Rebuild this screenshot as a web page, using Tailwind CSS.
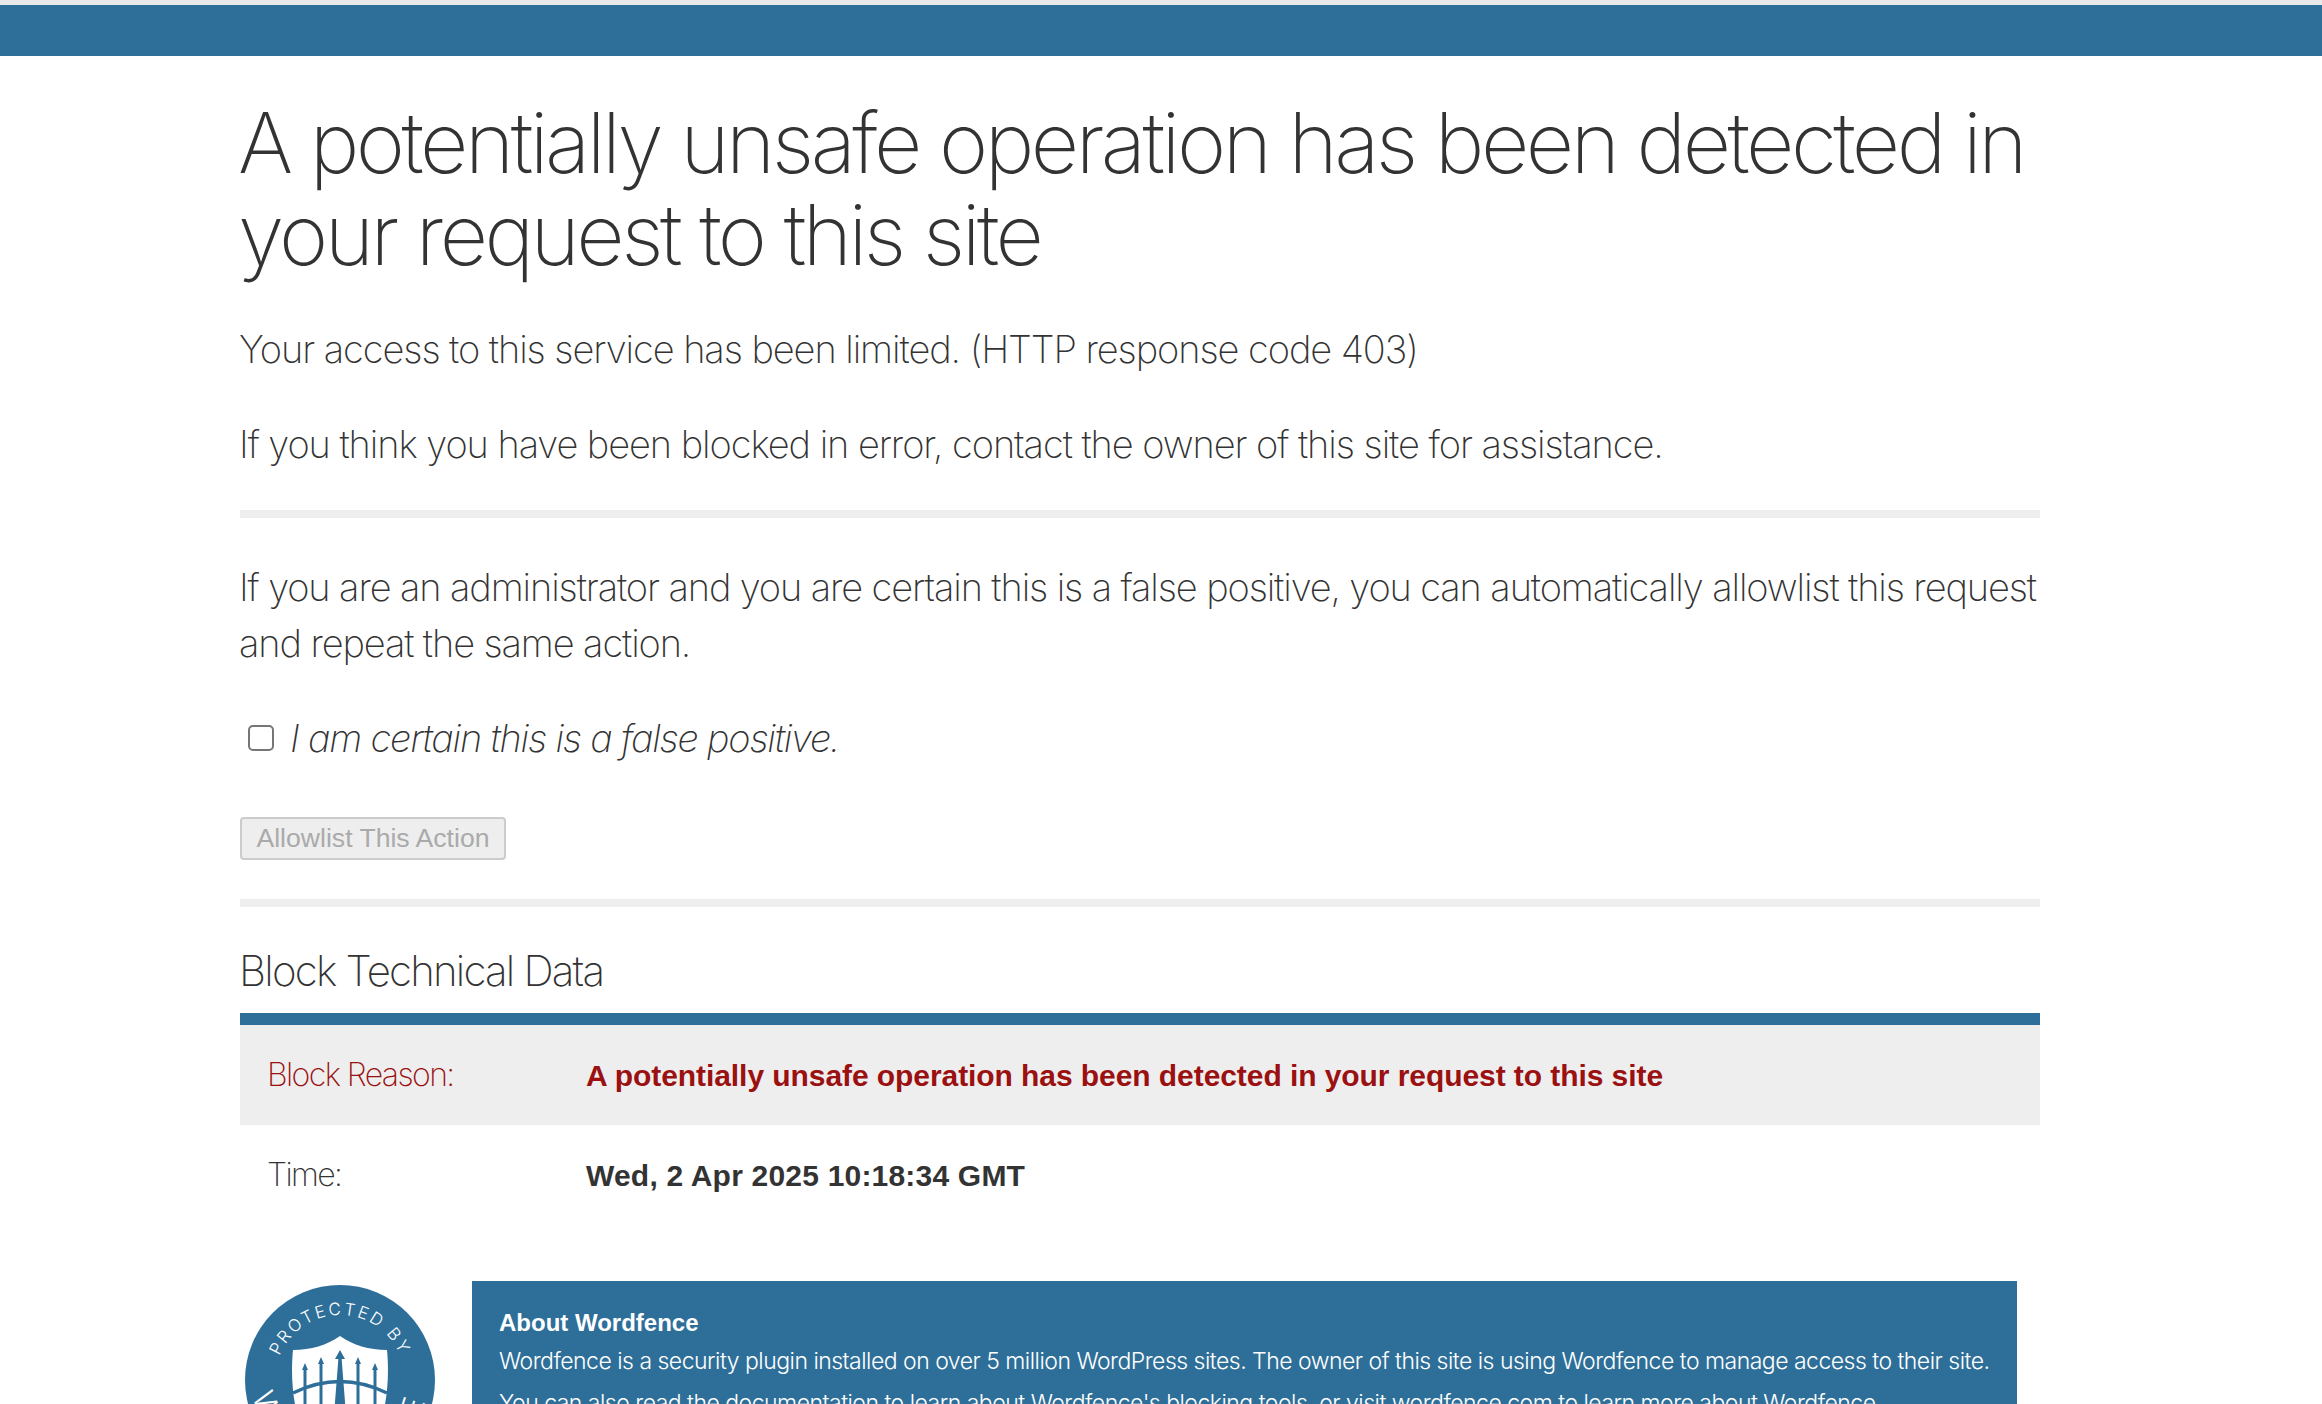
<!doctype html>
<html><head><meta charset="utf-8"><script src="https://cdn.jsdelivr.net/npm/@tailwindcss/browser@4"></script></head>
<body class="bg-white font-['Inter',sans-serif] text-[#333] overflow-hidden h-[1404px]">
<div class="h-[56px] bg-[#2e6f99] border-t-[5px] border-[#e8e8e8]"></div>
<main class="w-[1800px] ml-[240px]">
<h1 class="mt-[41px] -ml-[2px] text-[84px] leading-[92px] font-extralight tracking-[-3.52px]">A potentially unsafe operation has been detected in your request to this site</h1>
<p class="mt-[40px] -ml-[1px] text-[38px] leading-[56px] tracking-[-1.08px] font-extralight">Your access to this service has been limited. (HTTP response code 403)</p>
<p class="mt-[39px] -ml-[1px] text-[38px] leading-[56px] tracking-[-1.07px] font-extralight">If you think you have been blocked in error, contact the owner of this site for assistance.</p>
<hr class="mt-[38px] border-0 h-[8px] bg-[#eee]">
<p class="mt-[41px] -ml-[1px] text-[38px] leading-[56px] tracking-[-1.12px] font-extralight">If you are an administrator and you are certain this is a false positive, you can automatically allowlist this request and repeat the same action.</p>
<label class="mt-[39px] flex items-center text-[38px] leading-[56px] tracking-[-1.22px] italic font-extralight"><input type="checkbox" class="ml-[8px] mr-[16px] w-[26px] h-[26px] appearance-none border-2 border-[#767676] rounded-[5px]">I am certain this is a false positive.</label>
<button class="mt-[51px] block w-[266px] h-[43px] bg-[#eee] border-2 border-[#ccc] rounded-[4px] text-[#aaa] text-[26.6px] font-['Liberation_Sans',sans-serif]">Allowlist This Action</button>
<hr class="mt-[39px] border-0 h-[8px] bg-[#eee]">
<h2 class="mt-[39px] -ml-[1px] text-[42px] leading-[50px] font-extralight tracking-[-1.8px]">Block Technical Data</h2>
<div class="mt-[17px] border-t-[12px] border-[#2e6f99]">
<div class="flex items-center h-[100px] bg-[#eee] text-[#9b1010]"><span class="w-[346px] pl-[27px] text-[32px] font-extralight tracking-[-1.6px]">Block Reason:</span><b class="text-[30px] tracking-[-.07px] font-['Liberation_Sans',sans-serif]">A potentially unsafe operation has been detected in your request to this site</b></div>
<div class="flex items-center h-[100px]"><span class="w-[346px] pl-[27px] text-[32px] font-extralight tracking-[-1.6px]">Time:</span><b class="text-[30px] tracking-[.2px] font-['Liberation_Sans',sans-serif]">Wed, 2 Apr 2025 10:18:34 GMT</b></div>
</div>
<div class="mt-[56px] flex items-start">
<svg class="ml-[5px] mt-[4px] w-[190px] h-[190px] shrink-0" viewBox="0 0 190 190">
<circle cx="95" cy="95" r="95" fill="#2e6f99"/>
<path d="M95 51C82 60 66 65 48 65C46 85 47 110 52 128C60 146 80 160 95 168C110 160 130 146 138 128C143 110 144 85 142 65C124 65 108 60 95 51Z" fill="#fff"/>
<g fill="#2e6f99"><rect x="58.5" y="84" width="3" height="60"/><rect x="74.5" y="78" width="3" height="70"/><rect x="111.5" y="78" width="3" height="70"/><rect x="128.5" y="84" width="3" height="60"/>
<path d="M60 78L63 85H57Z M76 72L79 79H73Z M113 72L116 79H110Z M130 78L133 85H127Z M95 65L100 74H90Z M93.5 72H96.5L101 130H89Z"/></g>
<path d="M48 108Q95 85 142 108" fill="none" stroke="#2e6f99" stroke-width="3.5"/>
<defs><path id="topArc" d="M30 95A65 65 0 0 1 160 95"/><path id="bottomArc" d="M7 95A88 88 0 0 0 183 95"/></defs>
<text fill="#fff" font-size="17" font-weight="300" letter-spacing="2.3" text-anchor="middle" font-family="Inter"><textPath href="#topArc" startOffset="50%">PROTECTED BY</textPath></text>
<text fill="#fff" font-size="30" font-weight="300" letter-spacing="6" text-anchor="middle" font-family="Inter"><textPath href="#bottomArc" startOffset="50%">WORDFENCE</textPath></text>
</svg>
<div class="ml-[37px] w-[1545px] bg-[#2e6f99] text-white pl-[27px] pr-[10px] pt-[23px] pb-[30px] text-[23px] leading-[38px] tracking-[-.51px] font-light">
<b class="block font-bold font-['Liberation_Sans',sans-serif] text-[24px] tracking-[0]">About Wordfence</b>
<p>Wordfence is a security plugin installed on over 5 million WordPress sites. The owner of this site is using Wordfence to manage access to their site.</p>
<p class="mt-[4px]">You can also read the documentation to learn about Wordfence's blocking tools, or visit wordfence.com to learn more about Wordfence.</p>
</div>
</div>
</main>
</body></html>
